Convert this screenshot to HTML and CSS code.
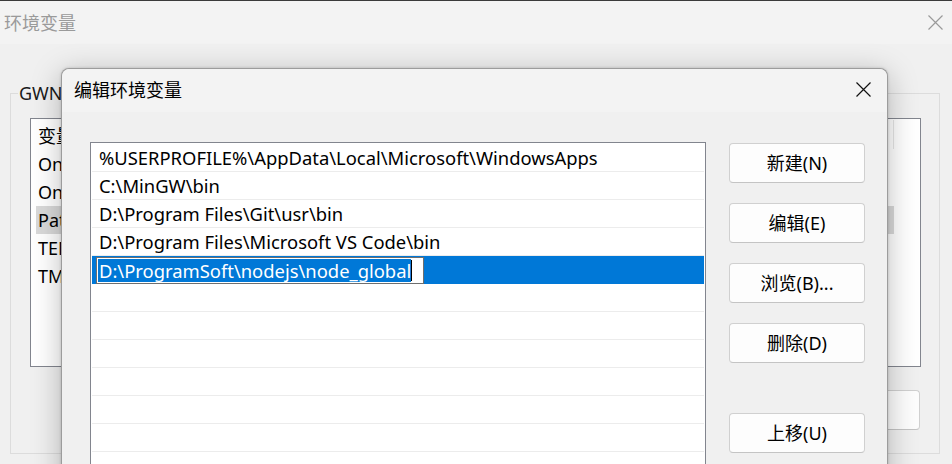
FILE: index.html
```html
<!DOCTYPE html>
<html lang="zh-CN">
<head>
<meta charset="utf-8">
<title>编辑环境变量</title>
<link rel="stylesheet" href="styles.css">
</head>
<body>
<div class="desktop">
  <div class="bg-window">
    <div class="bg-titlebar">
      <span class="bg-title">环境变量</span>
      <svg class="bg-close" width="15" height="15" viewBox="0 0 15 15"><path d="M0.5 0.5L14.5 14.5M14.5 0.5L0.5 14.5" stroke="#9a9a9a" stroke-width="1.2" fill="none"/></svg>
    </div>
    <div class="bg-body">
      <fieldset class="groupbox">
        <legend class="gb-legend">GWN 的用户变量(U)</legend>
        <div class="listview">
          <div class="lv-header">
            <span class="lv-col1">变量</span>
            <span class="lv-divider"></span>
          </div>
          <div class="lv-row"><span class="lv-col1">OneDrive</span></div>
          <div class="lv-row"><span class="lv-col1">OneDriveConsumer</span></div>
          <div class="lv-row lv-selected"><span class="lv-col1">Path</span></div>
          <div class="lv-row"><span class="lv-col1">TEMP</span></div>
          <div class="lv-row"><span class="lv-col1">TMP</span></div>
        </div>
        <div class="bg-buttons">
          <button class="win-btn bg-btn">新建(N)...</button>
          <button class="win-btn bg-btn">编辑(E)...</button>
          <button class="win-btn bg-btn">删除(D)</button>
        </div>
      </fieldset>
    </div>
  </div>

  <div class="dialog">
    <div class="dlg-titlebar">
      <span class="dlg-title">编辑环境变量</span>
      <svg class="dlg-close" width="15" height="15" viewBox="0 0 15 15"><path d="M0.5 0.5L14.5 14.5M14.5 0.5L0.5 14.5" stroke="#111" stroke-width="1.2" fill="none"/></svg>
    </div>
    <div class="dlg-body">
      <div class="pathlist">
        <div class="path-row">%USERPROFILE%\AppData\Local\Microsoft\WindowsApps</div>
        <div class="path-row">C:\MinGW\bin</div>
        <div class="path-row">D:\Program Files\Git\usr\bin</div>
        <div class="path-row">D:\Program Files\Microsoft VS Code\bin</div>
        <div class="path-row path-selected"><span class="edit-box"><span class="edit-sel">D:\ProgramSoft\nodejs\node_global</span><span class="caret"></span></span></div>
        <div class="path-row"></div>
        <div class="path-row"></div>
        <div class="path-row"></div>
        <div class="path-row"></div>
        <div class="path-row"></div>
        <div class="path-row"></div>
      </div>
      <div class="dlg-buttons">
        <button class="win-btn">新建(N)</button>
        <button class="win-btn">编辑(E)</button>
        <button class="win-btn">浏览(B)...</button>
        <button class="win-btn">删除(D)</button>
        <button class="win-btn btn-gap">上移(U)</button>
        <button class="win-btn">下移(O)</button>
      </div>
    </div>
  </div>
</div>
</body>
</html>
```

FILE: styles.css
```css
* { box-sizing: border-box; }

html, body {
  margin: 0;
  padding: 0;
}

body {
  width: 952px;
  height: 464px;
  overflow: hidden;
  background: #f0f0f0;
  font-family: "Noto Sans", "Noto Sans CJK SC", sans-serif;
  font-size: 18px;
  color: #000;
}

.desktop {
  position: relative;
  width: 952px;
  height: 464px;
  overflow: hidden;
}

/* ---------- background window ---------- */
.bg-window {
  width: 952px;
  height: 464px;
  background: #f0f0f0;
  border-top: 1px solid #3a3a3a;
}

.bg-titlebar {
  height: 43px;
  background: #f3f3f3;
  display: flex;
  align-items: center;
  justify-content: space-between;
  padding: 0 9px 0 4px;
}

.bg-title {
  color: #9a9a9a;
  line-height: 1;
}

.bg-close {
  display: block;
  margin-top: -1px;
}

.bg-body {
  padding: 0 12px 0 10px;
}

.groupbox {
  margin: 40px 0 0 0;
  padding: 0 0 23px 0;
  border: 1px solid #dcdcdc;
  min-width: 0;
}

.gb-legend {
  padding: 0 1px;
  margin-left: 7px;
  line-height: 18px;
  height: 18px;
  color: #1a1a1a;
  white-space: nowrap;
}

.listview {
  margin: 16px 18px 0 19px;
  height: 249px;
  border: 1px solid #82858e;
  background: #fff;
  padding: 0 26px 0 5px;
}

.lv-header {
  height: 31px;
  display: flex;
  align-items: center;
}

.lv-divider {
  margin-left: auto;
  width: 1px;
  height: 29px;
  background: #e5e5e5;
}

.lv-row {
  height: 28px;
  display: flex;
  align-items: center;
  white-space: nowrap;
}

.lv-col1 {
  width: 280px;
  padding-left: 2px;
}

.lv-selected {
  background: #d9d9d9;
}

.bg-buttons {
  margin: 23px 19px 0 0;
  display: flex;
  justify-content: flex-end;
  gap: 20px;
}

.bg-btn {
  width: 136px;
  height: 39px;
}

/* ---------- buttons ---------- */
.win-btn {
  display: block;
  font: inherit;
  font-size: 18px;
  color: #000;
  background: #fdfdfd;
  border: 1px solid #d0d0d0;
  border-bottom-color: #c4c4c4;
  border-radius: 4px;
  padding: 0;
  width: 136px;
  height: 40px;
  line-height: 1;
}

/* ---------- front dialog ---------- */
.dialog {
  position: absolute;
  left: 61px;
  top: 68px;
  width: 827px;
  height: 430px;
  background: #f0f0f0;
  border: 1px solid #9c9c9c;
  border-bottom: none;
  border-radius: 8px 8px 0 0;
  box-shadow: 0 6px 30px rgba(0, 0, 0, 0.26), 0 0 3px rgba(0, 0, 0, 0.18);
}

.dlg-titlebar {
  height: 43px;
  background: #f3f3f3;
  border-radius: 8px 8px 0 0;
  display: flex;
  align-items: center;
  justify-content: space-between;
  padding: 0 16px 0 13px;
}

.dlg-title {
  line-height: 1;
  margin-top: -1px;
  margin-left: -1px;
}

.dlg-close {
  display: block;
  margin-top: -3px;
}

.dlg-body {
  display: flex;
  align-items: flex-start;
  padding: 30px 0 0 28px;
  gap: 23px;
}

.pathlist {
  width: 616px;
  height: 400px;
  background: #fff;
  border: 1px solid #82858e;
  padding: 1px 1px 0 1px;
  font-size: 18.4px;
}

.path-row {
  height: 28px;
  border-bottom: 1px solid #ececec;
  padding-left: 7px;
  display: flex;
  align-items: center;
  white-space: nowrap;
}

.path-selected {
  background: #0078d7;
  border-bottom-color: #0078d7;
  padding-left: 4px;
  align-items: flex-start;
}

.edit-box {
  display: flex;
  align-items: center;
  height: 27px;
  margin-top: 1px;
  background: #fff;
  border: 1px solid #6e6e6e;
  padding: 1px 11px 1px 1px;
}

.edit-sel {
  display: block;
  height: 23px;
  line-height: 23px;
  background: #0078d7;
  color: #fff;
  padding-left: 1px;
}

.caret {
  display: block;
  width: 1px;
  height: 21px;
  background: #000;
}

.dlg-buttons {
  display: flex;
  flex-direction: column;
  gap: 20px;
  margin-top: 1px;
}

.btn-gap {
  margin-top: 30px;
}
```
